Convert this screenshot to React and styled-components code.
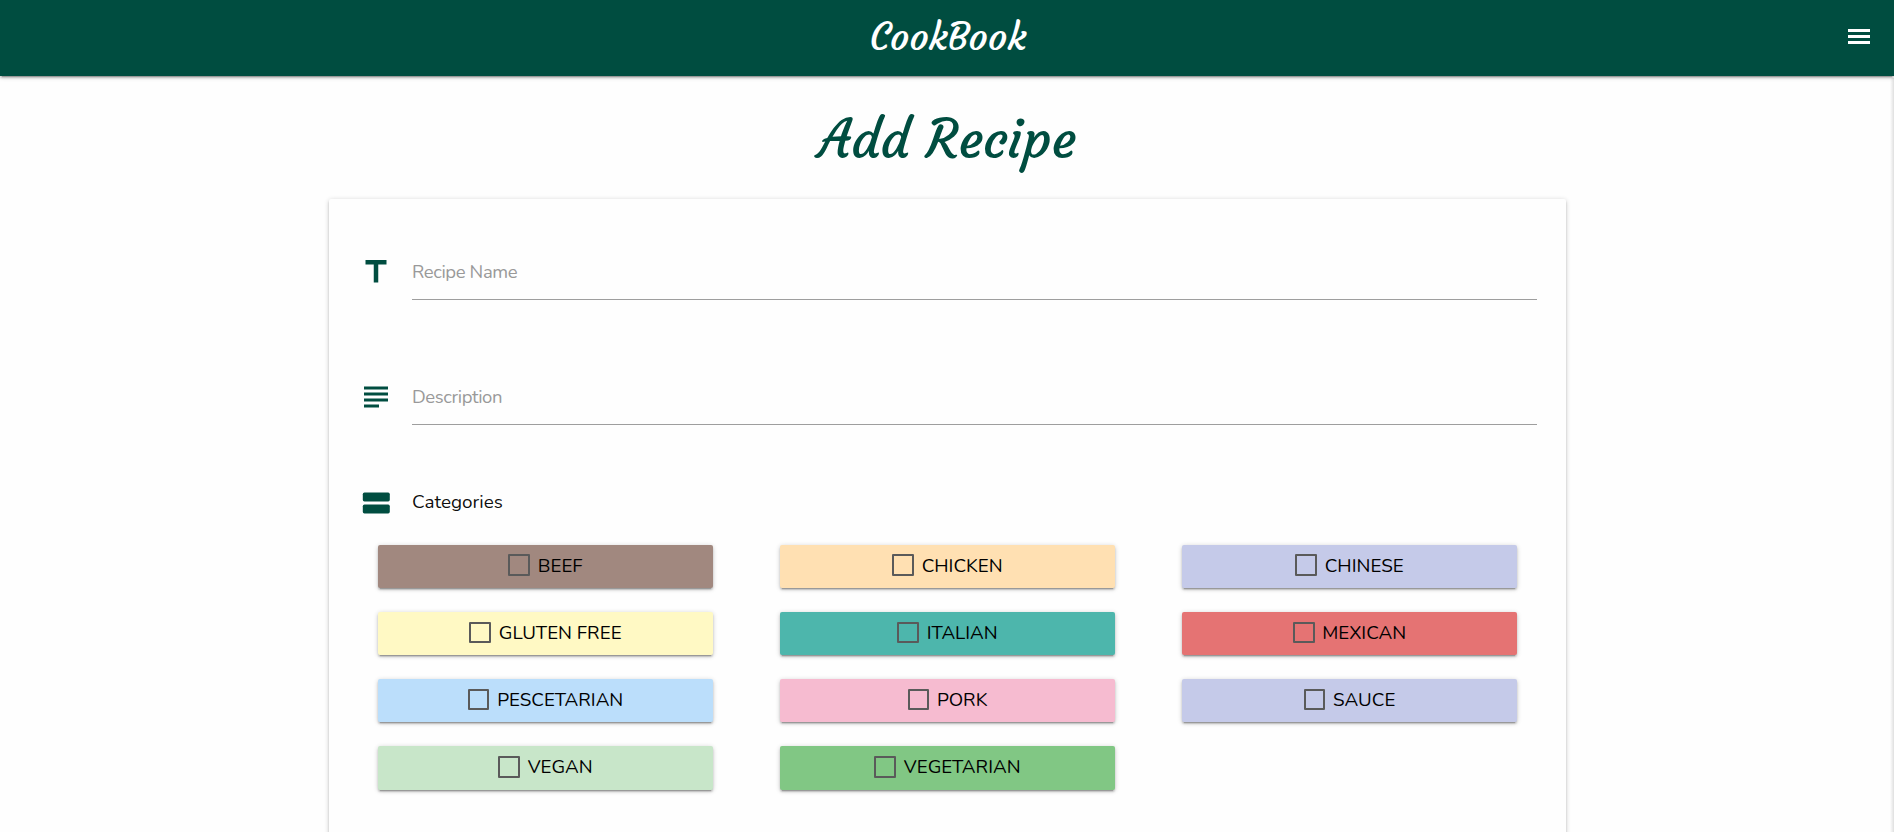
import React from "react";
import styled, { createGlobalStyle } from "styled-components";
import { MdSubject, MdTitle } from "react-icons/md";

const GlobalStyle = createGlobalStyle`
  *, *::before, *::after { box-sizing: border-box; }
  html, body { margin: 0; background: #fefefe; overflow: hidden; }
  body { font-family: Nunito, Lato, sans-serif; color: rgba(0, 0, 0, 0.95); }
`;

const green = "#004d40";
const raised =
  "0 2px 2px 0 rgba(0,0,0,.16), 0 3px 1px -2px rgba(0,0,0,.2), 0 1px 5px 0 rgba(0,0,0,.2)";

const Page = styled.div`
  height: 832px;
  overflow: hidden;
`;

const NavBar = styled.nav`
  display: grid;
  grid-template-columns: 1fr auto 1fr;
  height: 76px;
  padding: 0 24px;
  background: ${green};
  color: #fff;
  box-shadow: ${raised};
`;

const Brand = styled.a`
  grid-column: 2;
  padding-left: 2px;
  font: 400 37.8px/73px Courgette, Lato, sans-serif;
`;

const MenuButton = styled.button`
  display: flex;
  justify-self: end;
  align-self: start;
  margin-top: 29px;
  padding: 0;
  border: 0;
  background: none;
  color: inherit;
`;

const DrawerEdge = styled.div`
  position: absolute;
  top: 78px;
  right: 0;
  width: 4px;
  height: 754px;
  background: linear-gradient(to right, rgba(0, 0, 0, 0), rgba(0, 0, 0, 0.12));
`;

const Title = styled.h1`
  margin: 0;
  height: 123px;
  padding: 24px 0 0 1px;
  color: ${green};
  text-align: center;
  font: 400 52.56px/80px Courgette, Lato, sans-serif;
`;

const Card = styled.form`
  display: flex;
  flex-direction: column;
  width: 1237px;
  height: 760px;
  margin: 0 auto 0 329px;
  padding: 55px 29px 0;
  border-radius: 2px;
  background: #fefefe;
  box-shadow: ${raised};
`;

const Field = styled.div`
  display: flex;
  gap: 18px;
  height: ${(p) => p.$height}px;
`;

const IconSlot = styled.span`
  display: flex;
  flex: none;
  width: 36px;
  height: 36px;
  color: ${green};
  font-size: 36px;
`;

const Placeholder = styled.label`
  flex: 1;
  height: 46px;
  border-bottom: 1px solid #9e9e9e;
  color: #999;
  font-size: 18.5px;
  letter-spacing: -0.38px;
  line-height: 37px;
`;

const GroupLabel = styled.span`
  font-size: 18.9px;
  line-height: 34px;
`;

const Options = styled.div`
  display: grid;
  grid-template-columns: repeat(3, 335px);
  grid-auto-rows: 43.2px;
  gap: 24px 67px;
  padding-left: 20px;
`;

const Option = styled.label`
  display: flex;
  align-items: flex-start;
  justify-content: center;
  gap: 7.8px;
  padding-top: 9.6px;
  border-radius: 2px;
  background: ${(p) => p.$color};
  box-shadow: ${raised};
  color: #000;
`;

const Box = styled.span`
  width: 21.6px;
  height: 21.6px;
  border: 2px solid #5a5a5a;
  border-radius: 1px;
`;

const OptionText = styled.span`
  margin-top: 0.2px;
  font-size: 18.8px;
  line-height: 23.6px;
`;

const StackIcon = () => (
  <svg width="36" height="36" viewBox="0 0 24 24" fill="currentColor">
    <rect x="3.2" y="5" width="18" height="6" rx="1.1" />
    <rect x="3.2" y="13" width="18" height="6" rx="1.1" />
  </svg>
);

const MenuIcon = () => (
  <svg width="22" height="15" viewBox="0 0 22 15" fill="currentColor">
    <path d="M0 0h22v3H0zM0 6h22v3H0zM0 12h22v3H0z" />
  </svg>
);

const categories = [
  ["BEEF", "#a1887f"],
  ["CHICKEN", "#ffe0b2"],
  ["CHINESE", "#c5cae9"],
  ["GLUTEN FREE", "#fff9c4"],
  ["ITALIAN", "#4db6ac"],
  ["MEXICAN", "#e57373"],
  ["PESCETARIAN", "#bbdefb"],
  ["PORK", "#f6bbd0"],
  ["SAUCE", "#c5cae9"],
  ["VEGAN", "#c8e6c9"],
  ["VEGETARIAN", "#81c784"],
];

export default function App() {
  return (
    <Page>
      <GlobalStyle />
      <NavBar>
        <Brand>CookBook</Brand>
        <MenuButton type="button" aria-label="Menu">
          <MenuIcon />
        </MenuButton>
      </NavBar>
      <DrawerEdge />
      <Title>Add Recipe</Title>
      <Card>
        <Field $height={125}>
          <IconSlot><MdTitle /></IconSlot>
          <Placeholder>Recipe Name</Placeholder>
        </Field>
        <Field $height={106}>
          <IconSlot><MdSubject /></IconSlot>
          <Placeholder>Description</Placeholder>
        </Field>
        <Field $height={59.8}>
          <IconSlot><StackIcon /></IconSlot>
          <GroupLabel>Categories</GroupLabel>
        </Field>
        <Options>
          {categories.map(([name, color]) => (
            <Option key={name} $color={color}>
              <Box />
              <OptionText>{name}</OptionText>
            </Option>
          ))}
        </Options>
      </Card>
    </Page>
  );
}
